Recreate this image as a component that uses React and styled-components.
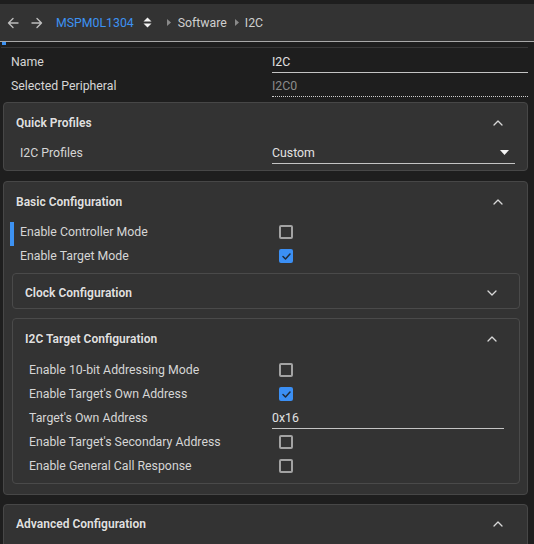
import React from "react";
import styled, { createGlobalStyle } from "styled-components";

const GlobalStyle = createGlobalStyle`
  html, body {
    margin: 0;
    padding: 0;
    background: #1e1e1e;
  }
  body {
    font-family: Roboto, "Liberation Sans", Arial, sans-serif;
    color: #d6d6d6;
  }
`;

const Page = styled.div`
  width: 534px;
  height: 544px;
  overflow: hidden;
  background: #1e1e1e;
`;

const TopStrip = styled.div`
  height: 4px;
  background: #1e1e1e;
`;

const Toolbar = styled.div`
  position: relative;
  height: 37px;
  background: #333333;
  border-bottom: 1px solid #a8a8a8;
  display: flex;
  align-items: center;
  padding-left: 7px;
  font-size: 12.3px;
`;

const NavButton = styled.span`
  display: flex;
  align-items: center;
  width: 12px;
  margin-right: ${(p) => p.$gap}px;
  color: #bdbdbd;
`;

const Device = styled.span`
  color: #3d92f2;
  margin-right: 9px;
`;

const Crumb = styled.span`
  color: #cfcfcf;
`;

const Sep = styled.span`
  display: flex;
  margin: 0 ${(p) => p.$right}px 0 ${(p) => p.$left}px;
`;

const Marker = styled.div`
  position: absolute;
  left: 2px;
  bottom: -4px;
  width: 4px;
  height: 3px;
  background: #3d92f2;
`;

const Content = styled.div`
  padding: 5px 6px 0 3px;
`;

const Divider = styled.div`
  height: 1px;
  background: #383838;
  margin: 0 0 2px -2px;
`;

const Row = styled.div`
  display: grid;
  grid-template-columns: ${(p) => 272 - p.$left}px 1fr;
  align-items: center;
  height: 24px;
  padding-right: ${(p) => p.$right}px;
  position: relative;
  font-size: 12.3px;
`;

const Label = styled.span`
  padding-left: ${(p) => p.$pad}px;
  color: #d6d6d6;
`;

const Focus = styled.span`
  position: absolute;
  left: 6px;
  top: 2px;
  width: 4px;
  height: 24px;
  background: #3d92f2;
`;

const TextField = styled.div`
  height: 21px;
  line-height: 22px;
  border-bottom: 1px ${(p) => (p.$disabled ? "dotted #cfcfcf" : "solid #c4c4c4")};
  color: ${(p) => (p.$disabled ? "#8c8c8c" : "#e2e2e2")};
  font-size: 12.3px;
  display: flex;
  justify-content: space-between;
  align-items: center;
  padding-right: 6px;
`;

const Check = styled.span`
  width: 10px;
  height: 10px;
  margin-left: 7px;
  border-radius: 2px;
  border: 2px solid ${(p) => (p.$on ? "#3b8ff4" : "#a3a3a3")};
  background: ${(p) => (p.$on ? "#3b8ff4" : "transparent")};
  display: flex;
  align-items: center;
  justify-content: center;
`;

const Card = styled.section`
  background: #333333;
  border: 1px solid ${(p) => (p.$inner ? "#4a4a4a" : "#474747")};
  border-radius: 4px;
  margin-top: ${(p) => p.$mt}px;
  padding-bottom: ${(p) => p.$pb}px;
`;

const CardHead = styled.div`
  height: ${(p) => p.$h}px;
  box-sizing: border-box;
  display: flex;
  align-items: center;
  justify-content: space-between;
  padding: ${(p) => p.$pt || 0}px ${(p) => p.$pr}px 0 12px;
  font-size: 12px;
  font-weight: 700;
  color: #dedede;
  text-shadow: 0 0 1px rgba(0, 0, 0, 0.6);
`;

const CardBody = styled.div`
  padding: 0 ${(p) => p.$pr}px 0 8px;
`;

const ArrowLeft = () => (
  <svg width="12" height="12" viewBox="0 0 12 12" fill="none" stroke="currentColor" strokeWidth="1.4" strokeLinecap="round" strokeLinejoin="round">
    <path d="M11 6H1.5M6 1.5L1.5 6L6 10.5" />
  </svg>
);

const ArrowRight = () => (
  <svg width="12" height="12" viewBox="0 0 12 12" fill="none" stroke="currentColor" strokeWidth="1.4" strokeLinecap="round" strokeLinejoin="round">
    <path d="M1 6h9.5M6 1.5L10.5 6L6 10.5" />
  </svg>
);

const Sort = () => (
  <svg width="9" height="11" viewBox="0 0 9 11" fill="#f2f2f2">
    <path d="M4.5 0.5L8.5 4.5H0.5Z" />
    <path d="M4.5 10.5L8.5 6.5H0.5Z" />
  </svg>
);

const Tri = () => (
  <svg width="4" height="7" viewBox="0 0 4 7" fill="#8a8a8a">
    <path d="M0 0L4 3.5L0 7Z" />
  </svg>
);

const Chevron = ({ up }) => (
  <svg width="10" height="6" viewBox="0 0 10 6" fill="none" stroke="#d8d8d8" strokeWidth="1.3" strokeLinecap="round" strokeLinejoin="round">
    <path d={up ? "M1 5L5 1L9 5" : "M1 1L5 5L9 1"} />
  </svg>
);

const Caret = () => (
  <svg width="9" height="5" viewBox="0 0 9 5" fill="#f4f4f4">
    <path d="M0 0H9L4.5 5Z" />
  </svg>
);

const Tick = () => (
  <svg width="9" height="7" viewBox="0 0 9 7" fill="none" stroke="#1f2a38" strokeWidth="1.5" strokeLinecap="round" strokeLinejoin="round">
    <path d="M1 3.5L3.5 6L8 1" />
  </svg>
);

const Box = ({ on }) => <Check $on={on}>{on && <Tick />}</Check>;

const targetRows = [
  { label: "Enable 10-bit Addressing Mode", on: false },
  { label: "Enable Target's Own Address", on: true },
  { label: "Target's Own Address", value: "0x16" },
  { label: "Enable Target's Secondary Address", on: false },
  { label: "Enable General Call Response", on: false },
];

export default function App() {
  return (
    <Page>
      <GlobalStyle />
      <TopStrip />
      <Toolbar>
        <NavButton $gap={12}>
          <ArrowLeft />
        </NavButton>
        <NavButton $gap={13}>
          <ArrowRight />
        </NavButton>
        <Device>MSPM0L1304</Device>
        <Sort />
        <Sep $left={15} $right={7}>
          <Tri />
        </Sep>
        <Crumb>Software</Crumb>
        <Sep $left={8} $right={6}>
          <Tri />
        </Sep>
        <Crumb>I2C</Crumb>
        <Marker />
      </Toolbar>
      <Content>
        <Divider />
        <Row $left={3} $right={0}>
          <Label $pad={8}>Name</Label>
          <TextField>I2C</TextField>
        </Row>
        <Row $left={3} $right={0}>
          <Label $pad={8}>Selected Peripheral</Label>
          <TextField $disabled>I2C0</TextField>
        </Row>

        <Card $mt={4} $pb={5}>
          <CardHead $h={38} $pt={2} $pr={24}>
            Quick Profiles
            <Chevron up />
          </CardHead>
          <Row $left={4} $right={12}>
            <Label $pad={16}>I2C Profiles</Label>
            <TextField>
              Custom
              <Caret />
            </TextField>
          </Row>
        </Card>

        <Card $mt={10} $pb={10}>
          <CardHead $h={38} $pt={1} $pr={24}>
            Basic Configuration
            <Chevron up />
          </CardHead>
          <Row $left={4} $right={12}>
            <Focus />
            <Label $pad={16}>Enable Controller Mode</Label>
            <div>
              <Box on={false} />
            </div>
          </Row>
          <Row $left={4} $right={12}>
            <Label $pad={16}>Enable Target Mode</Label>
            <div>
              <Box on />
            </div>
          </Row>
          <CardBody $pr={7}>
            <Card $inner $mt={5} $pb={0}>
              <CardHead $h={34} $pt={4} $pr={22}>
                Clock Configuration
                <Chevron />
              </CardHead>
            </Card>
            <Card $inner $mt={9} $pb={5}>
              <CardHead $h={39} $pt={1} $pr={22}>
                I2C Target Configuration
                <Chevron up />
              </CardHead>
              {targetRows.map((r) => (
                <Row key={r.label} $left={13} $right={15}>
                  <Label $pad={16}>{r.label}</Label>
                  {r.value ? (
                    <TextField>{r.value}</TextField>
                  ) : (
                    <div>
                      <Box on={r.on} />
                    </div>
                  )}
                </Row>
              ))}
            </Card>
          </CardBody>
        </Card>

        <Card $mt={9} $pb={10}>
          <CardHead $h={38} $pr={24}>
            Advanced Configuration
            <Chevron up />
          </CardHead>
        </Card>
      </Content>
    </Page>
  );
}
